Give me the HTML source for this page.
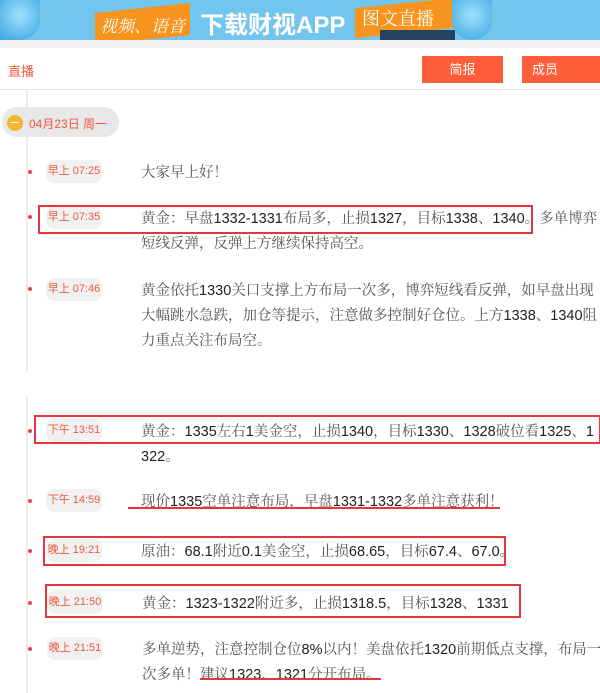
<!DOCTYPE html>
<html><head><meta charset="utf-8"><style>
body{margin:0;width:600px;height:693px;overflow:hidden;background:#fff;position:relative;font-family:"Liberation Sans","Noto Sans CJK SC",sans-serif}
.a{position:absolute}
.pill{position:absolute;left:46px;width:56px;height:23px;border-radius:8px;background:#f1f1f1;color:#f0593e;font-size:11px;line-height:23px;text-align:center;white-space:nowrap}
.dot{position:absolute;left:28px;width:4px;height:4px;border-radius:2px;background:#e8434a}
.t{position:absolute;left:141px;width:460px;font-family:"Liberation Sans","Noto Serif CJK SC",serif;font-size:14.5px;line-height:25px;color:#555;white-space:nowrap}
.t b{font-weight:normal;color:#222}
.box{position:absolute;border:2px solid #e8343c}
.ul{position:absolute;height:2px;background:#e8343c}
</style></head><body>
<div class="a" style="left:0;top:0;width:600px;height:40px;background:#72c6ee"></div>
<div class="a" style="left:0;top:0;width:40px;height:40px;background:radial-gradient(circle at 20px 15px,#9fe0ff,#39a4e0);border-radius:0 0 20px 0"></div>
<div class="a" style="left:95px;top:8px;width:95px;height:32px;background:#f7941d;transform:skewY(-6deg)"></div>
<div class="a" style="left:100px;top:12px;color:#fff;font-size:17px;font-family:'Noto Serif CJK SC',serif;font-style:italic">视频、语音</div>
<div class="a" style="left:200px;top:5px;color:#fff;font-size:24px;font-weight:bold;font-family:'Liberation Sans','Noto Sans CJK SC',sans-serif">下载财视APP</div>
<div class="a" style="left:355px;top:3px;width:100px;height:30px;background:#f7941d;transform:skewY(-6deg)"></div>
<div class="a" style="left:362px;top:5px;color:#fff;font-size:18px;font-family:'Noto Serif CJK SC',serif">图文直播</div>
<div class="a" style="left:380px;top:30px;width:75px;height:10px;background:#24435f"></div>
<div class="a" style="left:452px;top:0;width:40px;height:40px;background:radial-gradient(circle at 20px 15px,#9fe0ff,#39a4e0);border-radius:0 0 20px 20px"></div>
<div class="a" style="left:0;top:40px;width:600px;height:8px;background:#f1f1f1"></div>
<div class="a" style="left:8px;top:61px;color:#f0593e;font-size:13px">直播</div>
<div class="a" style="left:422px;top:56px;width:81px;height:27px;background:#ff5e3a;color:#fff;font-size:13px;line-height:27px;text-align:center">简报</div>
<div class="a" style="left:522px;top:56px;width:78px;height:27px;background:#ff5e3a;color:#fff;font-size:13px;line-height:27px;padding-left:10px;box-sizing:border-box">成员</div>
<div class="a" style="left:0;top:89px;width:600px;height:1px;background:#e2e2e2"></div>
<div class="a" style="left:26px;top:90px;width:2px;height:603px;background:#ececec"></div>
<div class="a" style="left:0;top:372px;width:600px;height:24px;background:#fff"></div>
<div class="a" style="left:2px;top:107px;width:117px;height:30px;border-radius:15px;background:#e8e8e8"></div>
<div class="a" style="left:7px;top:115px;width:16px;height:16px;border-radius:8px;background:#f5b731"></div>
<div class="a" style="left:11px;top:122px;width:8px;height:1px;background:#fff"></div>
<div class="a" style="left:29px;top:115px;color:#f0593e;font-size:12px">04月23日 周一</div>

<div class="dot" style="top:170px"></div><div class="pill" style="top:160px">早上 07:25</div>
<div class="t" style="top:161px">大家早上好！</div>

<div class="dot" style="top:215px"></div><div class="pill" style="top:206px">早上 07:35</div>
<div class="t" style="top:207px">黄金：早盘<b>1332-1331</b>布局多，止损<b>1327</b>，目标<b>1338</b>、<b>1340</b>。多单博弈<br>短线反弹，反弹上方继续保持高空。</div>
<div class="box" style="left:38px;top:205px;width:491px;height:25px"></div>

<div class="dot" style="top:287px"></div><div class="pill" style="top:278px">早上 07:46</div>
<div class="t" style="top:279px">黄金依托<b>1330</b>关口支撑上方布局一次多，博弈短线看反弹，如早盘出现<br>大幅跳水急跌，加仓等提示，注意做多控制好仓位。上方<b>1338</b>、<b>1340</b>阻<br>力重点关注布局空。</div>

<div class="dot" style="top:429px"></div><div class="pill" style="top:419px">下午 13:51</div>
<div class="t" style="top:420px">黄金：<b>1335</b>左右<b>1</b>美金空，止损<b>1340</b>，目标<b>1330</b>、<b>1328</b>破位看<b>1325</b>、<b>1</b><br><b>322</b>。</div>
<div class="box" style="left:34px;top:415px;width:563px;height:25px"></div>

<div class="dot" style="top:499px"></div><div class="pill" style="top:489px">下午 14:59</div>
<div class="t" style="top:490px">现价<b>1335</b>空单注意布局，早盘<b>1331-1332</b>多单注意获利！</div>
<div class="ul" style="left:128px;top:507px;width:372px"></div>

<div class="dot" style="top:549px"></div><div class="pill" style="top:539px">晚上 19:21</div>
<div class="t" style="top:540px">原油：<b>68.1</b>附近<b>0.1</b>美金空，止损<b>68.65</b>，目标<b>67.4</b>、<b>67.0</b>。</div>
<div class="box" style="left:43px;top:536px;width:459px;height:26px"></div>

<div class="dot" style="top:601px"></div><div class="pill" style="top:591px;left:47px">晚上 21:50</div>
<div class="t" style="top:592px;left:142px">黄金：<b>1323-1322</b>附近多，止损<b>1318.5</b>，目标<b>1328</b>、<b>1331</b></div>
<div class="box" style="left:45px;top:584px;width:472px;height:30px"></div>

<div class="dot" style="top:647px"></div><div class="pill" style="top:637px;left:47px">晚上 21:51</div>
<div class="t" style="top:638px;left:142px">多单逆势，注意控制仓位<b>8%</b>以内！美盘依托<b>1320</b>前期低点支撑，布局一<br>次多单！建议<b>1323</b>、<b>1321</b>分开布局。</div>
<div class="ul" style="left:200px;top:678px;width:181px"></div>
</body></html>
